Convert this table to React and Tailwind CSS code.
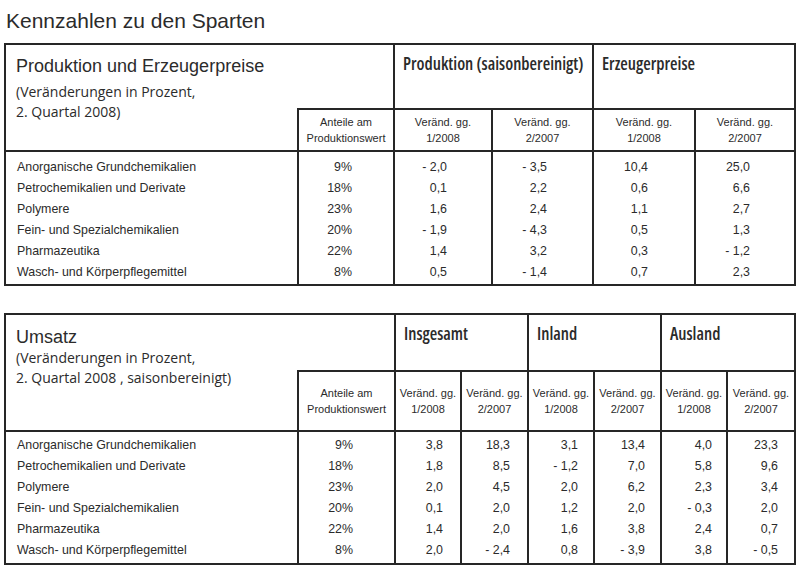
import React from 'react';

const sans = "font-['Liberation_Sans',Arial,sans-serif]";
const open = "font-['Open_Sans','Liberation_Sans',sans-serif] whitespace-nowrap";

const names = [
  'Anorganische Grundchemikalien',
  'Petrochemikalien und Derivate',
  'Polymere',
  'Fein- und Spezialchemikalien',
  'Pharmazeutika',
  'Wasch- und Körperpflegemittel',
];
const shares = ['9%', '18%', '23%', '20%', '22%', '8%'];

// column-wise values
const prodCols = [
  ['- 2,0', '0,1', '1,6', '- 1,9', '1,4', '0,5'],
  ['- 3,5', '2,2', '2,4', '- 4,3', '3,2', '- 1,4'],
  ['10,4', '0,6', '1,1', '0,5', '0,3', '0,7'],
  ['25,0', '6,6', '2,7', '1,3', '- 1,2', '2,3'],
];
const prodPad = ['pr-[44px]', 'pr-[45px]', 'pr-[46px]', 'pr-[44px]'];

const umsatzCols = [
  ['3,8', '1,8', '2,0', '0,1', '1,4', '2,0'],
  ['18,3', '8,5', '4,5', '2,0', '2,0', '- 2,4'],
  ['3,1', '- 1,2', '2,0', '1,2', '1,6', '0,8'],
  ['13,4', '7,0', '6,2', '2,0', '3,8', '- 3,9'],
  ['4,0', '5,8', '2,3', '- 0,3', '2,4', '3,8'],
  ['23,3', '9,6', '3,4', '2,0', '0,7', '- 0,5'],
];
const umsatzPad = ['pr-[17px]', 'pr-[17px]', 'pr-[15px]', 'pr-[15px]', 'pr-[14px]', 'pr-[16px]'];

const groupHead = `row-start-1 col-span-2 border-l-2 border-[#262626] pl-[8px] pt-[8px] text-[17.2px] leading-[22px] font-semibold [font-stretch:75%] ${open}`;
const twoLine = "flex flex-col items-center justify-center text-center text-[11px] leading-[16px] whitespace-nowrap";

function Values({ values, className }) {
  return (
    <div className={className}>
      {values.map((v, i) => (
        <div key={i} className="h-[21px] leading-[21px] text-[12.4px] text-right">{v}</div>
      ))}
    </div>
  );
}

function SubHead({ second, className }) {
  return (
    <div className={`row-start-2 border-l-2 border-t-2 border-[#262626] ${twoLine} ${className}`}>
      <span>Veränd. gg.</span>
      <span>{second}</span>
    </div>
  );
}

function Anteile() {
  return (
    <div className={`col-start-2 row-start-2 border-l-2 border-t-2 border-[#262626] bg-white ${twoLine}`}>
      <span>Anteile am</span>
      <span>Produktionswert</span>
    </div>
  );
}

function NameCol({ pad }) {
  return (
    <div className={`col-start-1 row-start-3 border-t-2 border-[#262626] pl-[11px] ${pad}`}>
      {names.map((n) => (
        <div key={n} className="h-[21px] leading-[21px] text-[12.4px]">{n}</div>
      ))}
    </div>
  );
}

export default function App() {
  return (
    <div className={`w-[800px] h-[571px] bg-white text-[#2b2b2b] ${sans}`}>
      <h1 className="pl-[6px] pt-[8px] text-[21px] leading-[26px] font-normal mb-[9px]">Kennzahlen zu den Sparten</h1>

      {/* Produktion und Erzeugerpreise */}
      <div className="ml-[4px] w-[792px] border-2 border-[#262626]">
        <div className="grid grid-cols-[291px_96px_98px_101px_102px_100px] grid-rows-[63px_42px_auto]">
          <div className="col-start-1 col-span-2 row-start-1 row-span-2 pl-[10px] pt-[10px]">
            <div className="text-[18px] leading-[22px]">Produktion und Erzeugerpreise</div>
            <div className={`mt-[5px] text-[14px] leading-[20px] ${open}`}>
              (Veränderungen in Prozent,
              <br />
              2. Quartal 2008)
            </div>
          </div>
          <div className={`col-start-3 ${groupHead}`}>Produktion (saisonbereinigt)</div>
          <div className={`col-start-5 ${groupHead}`}>Erzeugerpreise</div>
          <Anteile />
          <SubHead second="1/2008" className="col-start-3" />
          <SubHead second="2/2007" className="col-start-4" />
          <SubHead second="1/2008" className="col-start-5" />
          <SubHead second="2/2007" className="col-start-6" />

          <NameCol pad="pt-[5px] pb-[1px]" />
          <Values values={shares} className="col-start-2 row-start-3 border-l-2 border-t-2 border-[#262626] pt-[5px] pb-[1px] pr-[41px]" />
          {prodCols.map((col, i) => (
            <Values
              key={i}
              values={col}
              className={`row-start-3 border-l-2 border-t-2 border-[#262626] pt-[5px] pb-[1px] ${prodPad[i]}`}
            />
          ))}
        </div>
      </div>

      {/* Umsatz */}
      <div className="ml-[4px] mt-[27px] w-[792px] border-2 border-[#262626]">
        <div className="grid grid-cols-[291px_97px_66px_67px_66px_67px_66px_68px] grid-rows-[55px_60px_auto]">
          <div className="col-start-1 col-span-2 row-start-1 row-span-2 pl-[10px] pt-[11px]">
            <div className="text-[18px] leading-[22px]">Umsatz</div>
            <div className={`text-[14px] leading-[20px] ${open}`}>
              (Veränderungen in Prozent,
              <br />
              2. Quartal 2008 , saisonbereinigt)
            </div>
          </div>
          <div className={`col-start-3 ${groupHead}`}>Insgesamt</div>
          <div className={`col-start-5 ${groupHead}`}>Inland</div>
          <div className={`col-start-7 ${groupHead}`}>Ausland</div>
          <Anteile />
          <SubHead second="1/2008" className="col-start-3" />
          <SubHead second="2/2007" className="col-start-4" />
          <SubHead second="1/2008" className="col-start-5" />
          <SubHead second="2/2007" className="col-start-6" />
          <SubHead second="1/2008" className="col-start-7" />
          <SubHead second="2/2007" className="col-start-8" />

          <NameCol pad="pt-[3px] pb-[2px]" />
          <Values values={shares} className="col-start-2 row-start-3 border-l-2 border-t-2 border-[#262626] pt-[3px] pb-[2px] pr-[41px]" />
          {umsatzCols.map((col, i) => (
            <Values
              key={i}
              values={col}
              className={`row-start-3 border-l-2 border-t-2 border-[#262626] pt-[3px] pb-[2px] ${umsatzPad[i]}`}
            />
          ))}
        </div>
      </div>
    </div>
  );
}
